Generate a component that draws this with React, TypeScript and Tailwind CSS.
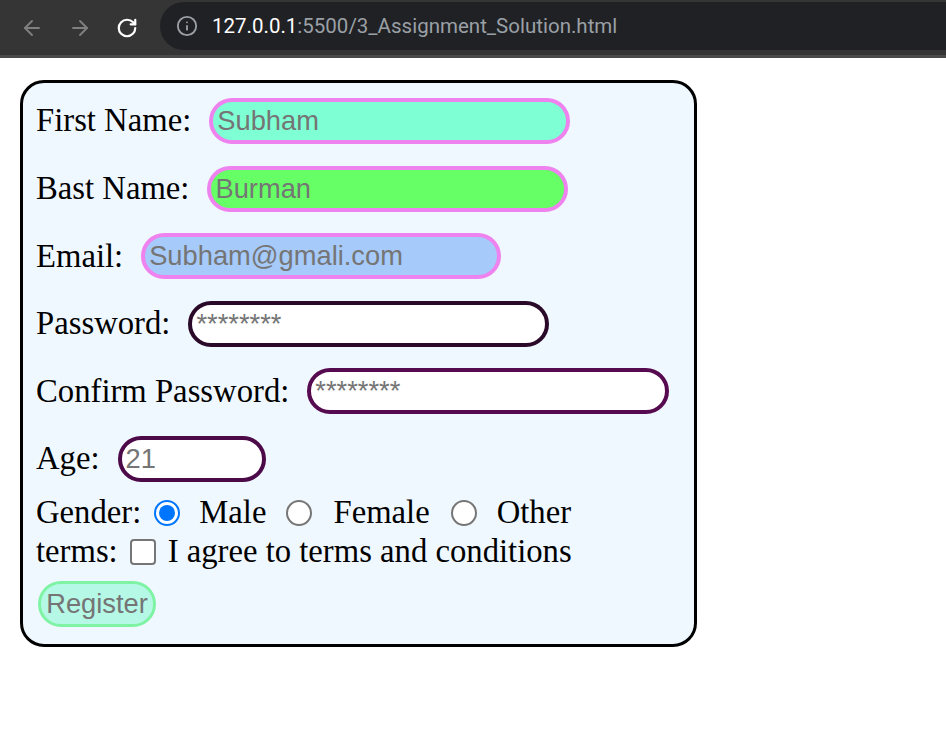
import { ArrowLeft, ArrowRight, RotateCw, Info } from 'lucide-react'

const serif = { fontFamily: '"Liberation Serif", "Times New Roman", serif' }

function Field({
  label,
  placeholder,
  width,
  border,
  bg,
}: {
  label: string
  placeholder: string
  width: string
  border: string
  bg: string
}) {
  return (
    <div className="flex items-center h-[46px] gap-[18px]">
      <span className="text-[32.7px] text-black whitespace-nowrap">{label}</span>
      <input
        type="text"
        readOnly
        placeholder={placeholder}
        className={`h-[46px] ${width} ${border} ${bg} border-[4px] rounded-full px-[4px] text-[27.3px] font-['Liberation_Sans',Arial,sans-serif] placeholder:text-[#757575] outline-none`}
      />
    </div>
  )
}

function Radio({ checked }: { checked?: boolean }) {
  return checked ? (
    <span className="w-[26px] h-[26px] rounded-full border-[2px] border-[#0075ff] bg-white flex items-center justify-center shrink-0">
      <span className="block w-[16px] h-[16px] rounded-full bg-[#0075ff]" />
    </span>
  ) : (
    <span className="block w-[26px] h-[26px] rounded-full border-[2px] border-[#767676] bg-white shrink-0" />
  )
}

export default function App() {
  return (
    <div className="min-h-screen bg-white">
      {/* browser chrome */}
      <div className="h-[58px] bg-[#353535] flex items-center border-b-[3px] border-[#4a4a4a]">
        <div className="flex items-center pl-[20px] gap-[24px] text-[#808080]">
          <ArrowLeft size={24} strokeWidth={1.8} />
          <ArrowRight size={24} strokeWidth={1.8} />
          <RotateCw size={22} strokeWidth={2.4} className="text-white" />
        </div>
        <div className="ml-[22px] flex-1 self-start mt-[2px] h-[48px] bg-[#202124] rounded-l-full flex items-center pl-[16px]">
          <Info size={22} strokeWidth={2} className="text-[#9aa0a6]" />
          <span className="ml-[14px] text-[20.5px] font-['Roboto',sans-serif]">
            <span className="text-white">127.0.0.1</span>
            <span className="text-[#9aa0a6]">:5500/3_Assignment_Solution.html</span>
          </span>
        </div>
      </div>

      <div className="pl-[20px] pt-[22px]" style={serif}>
        <form className="w-[677px] border-[3px] border-black rounded-[24px] bg-[#f0f8ff] pl-[13px] pt-[15px] pb-[17px]">
          <div className="flex flex-col gap-[21.6px]">
            <Field label="First Name:" placeholder="Subham" width="w-[361px]" border="border-[#ee82ee]" bg="bg-[#7fffd4]" />
            <Field label="Bast Name:" placeholder="Burman" width="w-[361px]" border="border-[#ee82ee]" bg="bg-[#66ff66]" />
            <Field label="Email:" placeholder="Subham@gmali.com" width="w-[360px]" border="border-[#ee82ee]" bg="bg-[#a6cafa]" />
            <Field label="Password:" placeholder="********" width="w-[361px]" border="border-[#2a0a28]" bg="bg-white" />
            <Field label="Confirm Password:" placeholder="********" width="w-[362px]" border="border-[#560a50]" bg="bg-white" />
            <Field label="Age:" placeholder="21" width="w-[148px]" border="border-[#4c0a48]" bg="bg-white" />
          </div>

          <div className="mt-[12.5px] flex items-center h-[37px] text-[32.7px] text-black">
            <span>Gender:</span>
            <span className="ml-[13px]"><Radio checked /></span>
            <span className="ml-[19px]">Male</span>
            <span className="ml-[20px]"><Radio /></span>
            <span className="ml-[21px]">Female</span>
            <span className="ml-[21px]"><Radio /></span>
            <span className="ml-[20px]">Other</span>
          </div>

          <div className="mt-[2px] flex items-center h-[37px] text-[32.7px] text-black">
            <span>terms:</span>
            <span className="block ml-[12px] w-[26px] h-[26px] rounded-[4px] border-[2px] border-[#767676] bg-white shrink-0" />
            <span className="ml-[12px]">I agree to terms and conditions</span>
          </div>

          <button
            type="button"
            className="mt-[11px] ml-[2px] w-[118px] h-[46px] rounded-full border-[3px] border-[#7ef3a4] bg-[#b5f8e6] text-[27.3px] text-[#757575] font-['Liberation_Sans',Arial,sans-serif] flex items-center justify-center"
          >
            Register
          </button>
        </form>
      </div>
    </div>
  )
}
